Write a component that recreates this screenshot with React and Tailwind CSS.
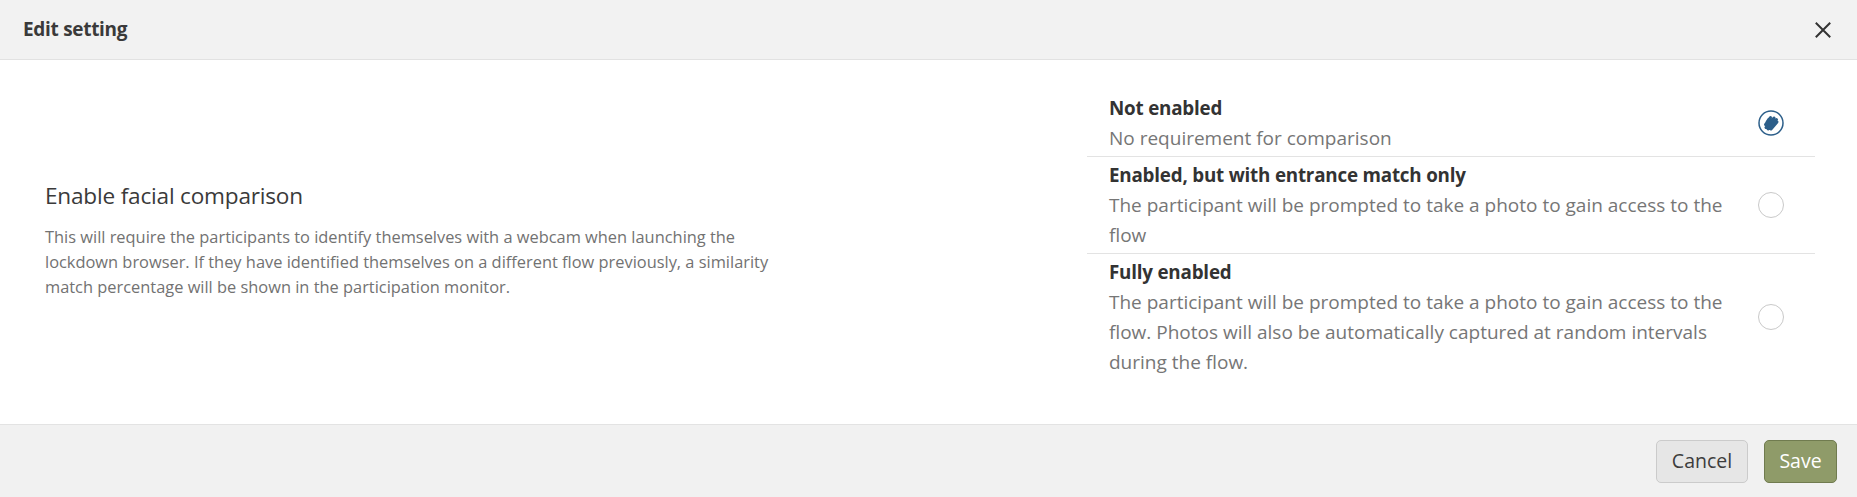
import { useState } from 'react';

const OPTIONS = [
  {
    id: 'off',
    title: 'Not enabled',
    text: 'No requirement for comparison',
  },
  {
    id: 'entrance',
    title: 'Enabled, but with entrance match only',
    text: 'The participant will be prompted to take a photo to gain access to the flow',
  },
  {
    id: 'full',
    title: 'Fully enabled',
    text: 'The participant will be prompted to take a photo to gain access to the flow. Photos will also be automatically captured at random intervals during the flow.',
  },
];

function Radio({ checked }) {
  if (!checked) {
    return <span className="block shrink-0 w-[26px] h-[26px] rounded-full border border-[#c9c9c9] bg-white" />;
  }
  return (
    <svg width="26" height="26" viewBox="0 0 26 26" className="block shrink-0">
      <circle cx="13" cy="13" r="12" fill="#fff" stroke="#2d5f8a" strokeWidth="1.5" />
      <path
        d="M7.5 14.5 L12.5 7.5 M8 17.5 L16 8 M10 19 L18.5 9.5 M13 19 L19 12 M9 12 L11 9"
        stroke="#2d5f8a"
        strokeWidth="3"
        strokeLinecap="round"
        fill="none"
      />
    </svg>
  );
}

export default function App() {
  const [value, setValue] = useState('off');

  return (
    <div
      className="w-[1857px] h-[497px] flex flex-col bg-white text-[#333]"
      style={{ fontFamily: '"Open Sans", "Noto Sans", sans-serif' }}
    >
      <header className="h-[60px] shrink-0 flex items-center justify-between pl-[23px] pr-[26px] bg-[#f2f2f2] border-b border-[#e2e2e2]">
        <h2 className="text-[19px] font-bold text-[#3a3a3a] tracking-[-0.3px]">Edit setting</h2>
        <button type="button" aria-label="Close" className="w-[16px] h-[16px] flex items-center justify-center">
          <svg width="16" height="16" viewBox="0 0 16 16">
            <path d="M1.5 1.5 L14.5 14.5 M14.5 1.5 L1.5 14.5" stroke="#333" strokeWidth="2" strokeLinecap="square" />
          </svg>
        </button>
      </header>

      <main className="flex-1 flex items-center justify-between pl-[45px] pr-[42px] pt-[30px] pb-[44px]">
        <div className="w-[745px] pt-[12px]">
          <h3 className="text-[22.6px] leading-[28px] text-[#3a3a3a] tracking-[-0.2px]">Enable facial comparison</h3>
          <p className="mt-[15px] text-[16.4px] leading-[24.8px] text-[#727272]">
            This will require the participants to identify themselves with a webcam when launching the
            lockdown browser. If they have identified themselves on a different flow previously, a
            similarity match percentage will be shown in the participation monitor.
          </p>
        </div>

        <div className="w-[728px] flex flex-col">
          {OPTIONS.map((o, i) => (
            <label
              key={o.id}
              onClick={() => setValue(o.id)}
              className={`flex items-center justify-between pl-[22px] pr-[31px] py-[3px] cursor-pointer ${
                i < OPTIONS.length - 1 ? 'border-b border-[#e3e3e3]' : ''
              }`}
            >
              <div className="w-[632px]">
                <div className="text-[18.8px] leading-[30px] font-bold text-[#333] tracking-[-0.2px]">{o.title}</div>
                <div className="text-[19px] leading-[30px] text-[#767676]">{o.text}</div>
              </div>
              <Radio checked={value === o.id} />
            </label>
          ))}
        </div>
      </main>

      <footer className="h-[73px] shrink-0 flex items-center justify-end gap-[16px] pr-[20px] bg-[#f1f1f1] border-t border-[#e3e3e3]">
        <button
          type="button"
          className="h-[43px] w-[92px] rounded-[5px] border border-[#cbcbcb] bg-[#e6e6e6] text-[19.5px] text-[#3d3d3d]"
        >
          Cancel
        </button>
        <button
          type="button"
          className="h-[43px] w-[73px] rounded-[5px] border border-[#707b4f] bg-[#8f9b69] text-[19.5px] text-white"
        >
          Save
        </button>
      </footer>
    </div>
  );
}
